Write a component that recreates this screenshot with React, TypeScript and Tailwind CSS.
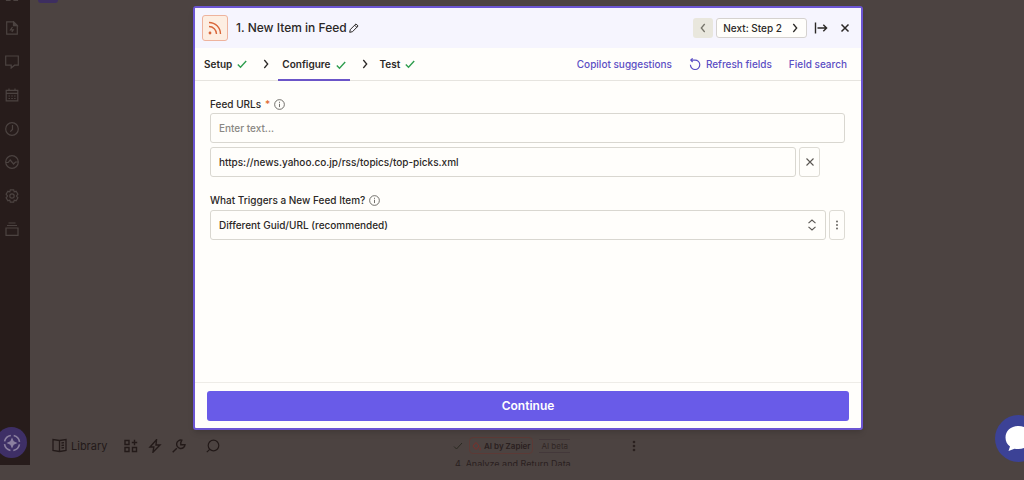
import React from 'react';

type IconProps = { className?: string; children: React.ReactNode; box?: number; width?: number };

function Icon({ className = 'size-3.5', children, box = 14, width = 1.2 }: IconProps) {
  return (
    <svg
      viewBox={`0 0 ${box} ${box}`}
      className={`shrink-0 ${className}`}
      fill="none"
      stroke="currentColor"
      strokeWidth={width}
      aria-hidden="true"
    >
      {children}
    </svg>
  );
}

const navItems = [
  { label: 'Home', art: <path d="M1.5 6v6.5h3.500v-4h4v4h3.500V6L7 1.500z" /> },
  {
    label: 'Zaps',
    art: (
      <>
        <path d="M8.500 .8H1.700v12.400h10.600V4.600z" />
        <path d="M8.500 .8v3.800h3.800z" fill="currentColor" />
        <path d="M7.500 6 5.500 8.800h2.800L6.800 11" />
      </>
    ),
  },
  { label: 'Chatbots', art: <path d="M.7 1h12.600v9.200H9.600L6.200 13V10.200H.7z" /> },
  {
    label: 'Tables',
    art: (
      <>
        <path d="M1.200 2.400h11.600v10.400H1.200zM4 .4v2M10 .4v2M1.200 5.400h11.600" />
        <path d="M3.500 8h1.500M6.300 8h1.500M9.100 8h1.500M3.500 10.500h1.500M6.300 10.500h1.500M9.100 10.500h1.500" />
      </>
    ),
  },
  {
    label: 'Zap history',
    art: (
      <>
        <circle cx="7" cy="7" r="6.300" />
        <path d="M7.500 3v4.500L5.300 9.700" />
      </>
    ),
  },
  {
    label: 'Activity',
    art: (
      <>
        <circle cx="7" cy="7" r="6.300" />
        <path d="M1 7.500h2.200L5.200 5 8.600 9l1.900-2H13" />
      </>
    ),
  },
  {
    label: 'Settings',
    art: (
      <>
        <path d="M5.300.9h3.400l.5 1.900 1.900-.5 1.800 2.900L11.500 7l1.400 1.800-1.800 2.900-1.900-.5-.5 1.900H5.300l-.5-1.900-1.900.5-1.800-2.900L2.500 7 1.100 5.200l1.800-2.900 1.900.5z" />
        <circle cx="7" cy="7" r="2.200" />
      </>
    ),
  },
  { label: 'More', art: <path d="M1 6h12v7.300H1zM2 3.500h10M3.500 1h7" /> },
];

function Check() {
  return (
    <Icon className="size-2.5 text-[#2f9e4f]" box={10} width={1.4}>
      <path d="M.8 5.500 3.500 8.200 9.200 2" />
    </Icon>
  );
}

function Chevron({ flip = false, className = 'size-2.5' }: { flip?: boolean; className?: string }) {
  return (
    <Icon className={className} box={10} width={1.3}>
      <path d={flip ? 'M6.700 1 3.300 5l3.400 4' : 'M3.300 1l3.400 4-3.400 4'} />
    </Icon>
  );
}

function Info() {
  return (
    <Icon className="size-[11px] text-[#55534e]" box={12} width={0.9}>
      <circle cx="6" cy="6" r="5.300" />
      <path d="M6 5.200v3.600M6 3v1.200" />
    </Icon>
  );
}

function Sidebar() {
  return (
    <aside className="mb-[15px] flex w-[30px] shrink-0 flex-col justify-between overflow-hidden bg-[#271c1b] pb-[7px] text-[#4c4341]">
      <nav className="-mt-3 ml-[5px] flex h-[248px] flex-col justify-between">
        {navItems.map((item) => (
          <a key={item.label} href="#" aria-label={item.label} className="block size-3.5">
            <Icon>{item.art}</Icon>
          </a>
        ))}
      </nav>
      <button
        type="button"
        aria-label="Assistant"
        className="-ml-1 flex size-[31px] items-center justify-center rounded-full bg-[#3e2f66] text-[#8c80a0]"
      >
        <Icon className="size-[18px]" box={18} width={1.6}>
          <circle cx="9" cy="9" r="7.600" strokeDasharray="9 2.940" strokeDashoffset="-1.500" />
          <path d="M9 3.500l1.700 3.800L14.500 9l-3.800 1.700L9 14.500l-1.700-3.800L3.500 9l3.800-1.700z" fill="currentColor" stroke="none" />
        </Icon>
      </button>
    </aside>
  );
}

function BottomBar() {
  return (
    <div className="flex items-center pl-[22px] text-[#231a19]">
      <button type="button" className="flex items-center gap-1 text-[11px]">
        <Icon className="size-[15px]" box={15} width={1.3}>
          <path d="M7.500 2.500 1 1.500v11l6.500 1 6.500-1v-11zM7.500 2.500v11M9.500 5l2.500-.3M9.500 7.500l2.500-.3M9.500 10l2.500-.3" />
        </Icon>
        Library
      </button>
      <div className="ml-[17px] flex items-center gap-2.5">
        <button type="button" aria-label="Apps">
          <Icon width={1.400}>
            <path d="M1 1.500h4v4H1zM1 8.500h4v4H1zM8.500 8.500h4v4h-4zM10.500 .8v5.400M7.800 3.500h5.400" />
          </Icon>
        </button>
        <button type="button" aria-label="Actions">
          <Icon width={1.400}>
            <path d="M8.500 .8 2 8h3.800L5 13.200 12 6H8z" />
          </Icon>
        </button>
        <button type="button" aria-label="Tools">
          <Icon width={1.400}>
            <path d="M.7 13.300 4.800 9.200M9.800 1.200a4.200 4.200 0 1 0 3.200 4.500H8.800V3.500z" />
          </Icon>
        </button>
      </div>
      <button type="button" aria-label="Search" className="ml-5">
        <Icon width={1.200}>
          <circle cx="7.500" cy="6.500" r="5.300" />
          <path d="M.8 13.200 3.700 10.300" />
        </Icon>
      </button>
    </div>
  );
}

function StepCard() {
  return (
    <section className="absolute top-[436px] left-1/2 ml-[-74px] h-[30px] w-[185px] overflow-hidden text-[8px] text-[#2a201f]">
      <div className="flex h-[19px] items-center">
        <Icon className="size-2.5 text-[#2b2a22]" box={10} width={1}>
          <path d="M1 5.500 3.500 8 9 2" />
        </Icon>
        <span className="ml-1.5 flex h-[17px] items-center gap-0.5 rounded-sm border border-[#5c3a36] px-0.5 font-semibold">
          <Icon className="size-2.5 text-[#7b302b]" box={10} width={1}>
            <path d="M4 1.500 7 5 4 8.500 1 5zM8 6.500v3" />
          </Icon>
          AI by Zapier
        </span>
        <span className="ml-1.5 border-y border-[#43383a] px-0.5 text-[#302624]">AI beta</span>
        <button type="button" aria-label="Step options" className="ml-auto">
          <svg viewBox="0 0 8 12" className="h-3 w-2" fill="currentColor" aria-hidden="true">
            <circle cx="4" cy="2" r="1.300" />
            <circle cx="4" cy="6" r="1.300" />
            <circle cx="4" cy="10" r="1.300" />
          </svg>
        </button>
      </div>
      <p className="pl-0.5 text-[9px] leading-[18px]">4. Analyze and Return Data</p>
    </section>
  );
}

const linkClass = 'flex items-center gap-[5px] text-[#5b4ec4]';
const fieldClass =
  'block h-[30px] w-full rounded-[3px] border border-[#d9d7d0] bg-[#fffefb] px-2 text-[10px] font-medium text-[#2b2826] outline-none';
const smallButton =
  'flex h-[30px] shrink-0 items-center justify-center rounded-[3px] border border-[#dddbd4] text-[#5a5753]';

function StepDialog() {
  return (
    <div
      role="dialog"
      aria-label="New Item in Feed"
      className="pointer-events-auto flex w-full max-w-[670px] flex-col overflow-hidden rounded-[3px] border-2 border-[#6b55d2] bg-[#fffefb] text-[10px] font-medium text-[#2b2826] shadow-md"
    >
      <header className="flex h-10 shrink-0 items-center bg-[#f6f5fe] pr-[11px] pl-[7px]">
        <span className="flex size-[26px] items-center justify-center rounded-[3px] border border-[#eeb39d] bg-[#fdeee2] text-[#d9663a]">
          <Icon className="size-4" box={16} width={1.400}>
            <path d="M2 2.500A11.500 11.500 0 0 1 13.500 14M2 6.500A7.500 7.500 0 0 1 9.500 14" />
            <circle cx="3" cy="13" r="1.400" fill="currentColor" stroke="none" />
          </Icon>
        </span>
        <h1 className="ml-2 text-xs font-medium">1. New Item in Feed</h1>
        <button type="button" aria-label="Rename step" className="ml-0.5">
          <Icon className="size-2.5" box={10} width={1}>
            <path d="M.7 9.300 1.300 6.500 7 .9 9.100 3 3.500 8.700zM5.700 2.200l2.100 2.100" />
          </Icon>
        </button>
        <div className="ml-auto flex items-center">
          <button
            type="button"
            aria-label="Previous step"
            className="flex size-5 items-center justify-center rounded-[3px] bg-[#e9e7dd] text-[#77756b]"
          >
            <Chevron flip />
          </button>
          <button
            type="button"
            className="ml-[3px] flex h-5 items-center gap-2 rounded-[3px] border border-[#d5d2cf] bg-[#fffefb] px-1.5"
          >
            Next: Step 2
            <Chevron />
          </button>
          <button type="button" aria-label="Collapse panel" className="ml-[7px]">
            <Icon width={1.400}>
              <path d="M1.500 1.500v11M3.500 7h9M9.300 3.700 12.600 7 9.300 10.300" />
            </Icon>
          </button>
          <button type="button" aria-label="Close" className="ml-3">
            <Icon className="size-2.5" box={10} width={1.500}>
              <path d="M1.500 1.500l7 7M8.500 1.500l-7 7" />
            </Icon>
          </button>
        </div>
      </header>

      <div className="flex h-[33px] shrink-0 items-stretch border-b border-[#e6e4df] pr-3.5 pl-[9px]">
        <nav className="flex items-stretch font-semibold">
          <a href="#" className="flex items-center gap-[5px]">
            Setup
            <Check />
          </a>
          <span className="flex w-[31px] items-center justify-center pl-1.5">
            <Chevron />
          </span>
          <a
            href="#"
            aria-current="step"
            className="-mb-px flex items-center gap-[5px] border-y-2 border-t-transparent border-b-[#6b55c8] px-1"
          >
            Configure
            <Check />
          </a>
          <span className="flex w-[30px] items-center justify-center">
            <Chevron />
          </span>
          <a href="#" className="flex items-center gap-[5px]">
            Test
            <Check />
          </a>
        </nav>
        <div className="ml-auto flex items-center gap-[17px]">
          <a href="#" className={linkClass}>
            Copilot suggestions
          </a>
          <a href="#" className={linkClass}>
            <Icon className="size-3" box={12} width={1.200}>
              <path d="M1.400 6.800A4.700 4.700 0 1 0 6 2.100H2M3.600.4 1.800 2.100 3.600 4" />
            </Icon>
            Refresh fields
          </a>
          <a href="#" className={linkClass}>
            Field search
          </a>
        </div>
      </div>

      <form className="flex-1 px-4 pt-4 pl-[15px]">
        <label htmlFor="feed-urls" className="mb-0.5 flex h-[14px] items-center gap-1">
          Feed URLs <span className="text-[#e0692e]">*</span>
          <Info />
        </label>
        <input id="feed-urls" type="text" placeholder="Enter text..." className={`${fieldClass} placeholder:text-[#8a8883]`} />
        <div className="mt-1 flex gap-[3px] pr-[25px]">
          <input
            type="text"
            aria-label="Feed URL 1"
            defaultValue="https://news.yahoo.co.jp/rss/topics/top-picks.xml"
            className={`${fieldClass} min-w-0 flex-1`}
          />
          <button type="button" aria-label="Remove feed URL" className={`${smallButton} w-[21px]`}>
            <Icon className="size-2.5" box={10} width={1.100}>
              <path d="M1.500 1.500l7 7M8.500 1.500l-7 7" />
            </Icon>
          </button>
        </div>

        <label htmlFor="trigger" className="mt-4 mb-[3px] flex h-[14px] items-center gap-1">
          What Triggers a New Feed Item?
          <Info />
        </label>
        <div className="flex gap-[3px]">
          <div className="relative min-w-0 flex-1">
            <select id="trigger" className={`${fieldClass} appearance-none`}>
              <option>Different Guid/URL (recommended)</option>
            </select>
            <Icon
              className="pointer-events-none absolute top-[9px] right-2 size-3 text-[#5a5753]"
              box={12}
              width={1.100}
            >
              <path d="M2.500 4.200 6 1l3.500 3.200M2.500 7.800 6 11l3.500-3.200" />
            </Icon>
          </div>
          <button type="button" aria-label="Field options" className={`${smallButton} w-4`}>
            <svg viewBox="0 0 4 10" className="h-2.5 w-1" fill="currentColor" aria-hidden="true">
              <circle cx="2" cy="1.500" r="0.900" />
              <circle cx="2" cy="5" r="0.900" />
              <circle cx="2" cy="8.500" r="0.900" />
            </svg>
          </button>
        </div>
      </form>

      <footer className="border-t border-[#eeece7] px-3 pt-2 pb-[7px]">
        <button type="button" className="h-[30px] w-full rounded-[3px] bg-[#695be8] text-xs font-semibold text-white">
          Continue
        </button>
      </footer>
    </div>
  );
}

export default function App() {
  return (
    <div className="relative flex h-screen overflow-hidden bg-[#4c4341] font-['Inter','Liberation_Sans',sans-serif]">
      <Sidebar />
      <main className="relative flex min-w-0 flex-1 flex-col justify-between overflow-hidden pb-[26px]">
        <div className="ml-2 h-[3px] w-5 rounded-b-sm bg-[#3d2e60]" />
        <BottomBar />
        <StepCard />
        <div className="pointer-events-none absolute inset-0 bottom-[50px] flex justify-center pt-[6px] pr-2 pl-2.5">
          <StepDialog />
        </div>
      </main>
      <button
        type="button"
        aria-label="Open chat"
        className="absolute right-[-18px] bottom-[18px] flex size-[47px] items-center rounded-full bg-[#3c4296] pl-2.5 text-white"
      >
        <svg viewBox="0 0 27 25" className="h-[25px] w-[27px]" fill="currentColor" aria-hidden="true">
          <path d="M13.500 0C6 0 .5 4.800.5 11.500c0 4 1.700 7 4.500 9L3.500 25l6-2.300c1.300.3 2.600.4 4 .4C21 23 26.500 18.200 26.500 11.500S21 0 13.500 0z" />
        </svg>
      </button>
    </div>
  );
}
